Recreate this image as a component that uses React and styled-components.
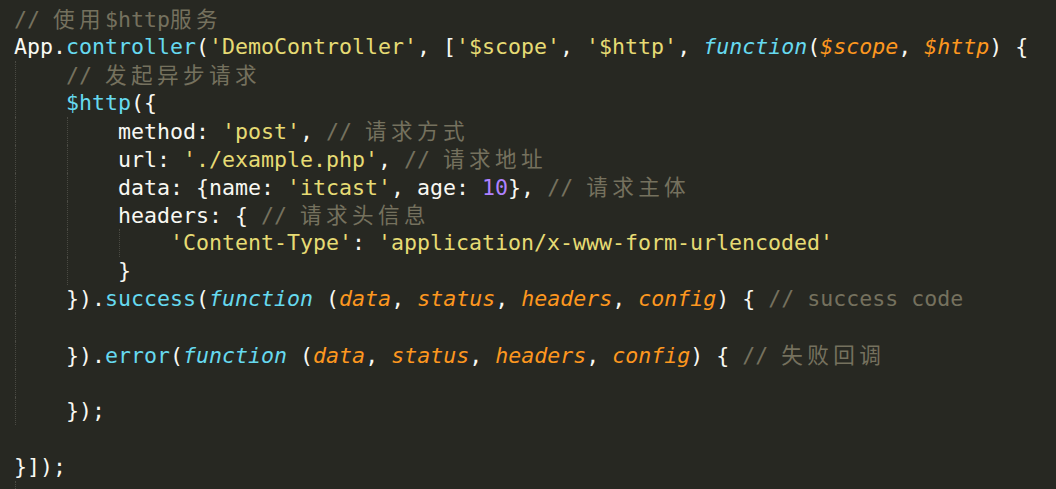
import React from 'react';
import styled, { createGlobalStyle } from 'styled-components';

const GlobalStyle = createGlobalStyle`
    html, body {
        margin: 0;
        padding: 0;
        background: #272822;
    }
`;

const Editor = styled.div`
    box-sizing: border-box;
    min-height: 100vh;
    background: #272822;
    padding: 5px 0 0 14px;
    font-family: "DejaVu Sans Mono", "Noto Sans CJK SC", monospace;
    font-size: 21.6px;
    color: #f8f8f2;
    overflow: hidden;
`;

const Line = styled.div`
    display: flex;
    align-items: center;
    height: 28px;
    line-height: 28px;
`;

const Code = styled.span`
    white-space: pre;
`;

// one indent level = 4 columns, dotted guide when the block goes on
const Indent = styled.span`
    display: inline-block;
    flex: none;
    box-sizing: border-box;
    height: 28px;
    margin-left: ${p => (p.$guide ? '1px' : '0')};
    width: ${p => (p.$guide ? '51px' : '52px')};
    border-left: ${p => (p.$guide ? '1px dotted #4a4a43' : 'none')};
`;

const Fn = styled.span`color: #66d9ef;`;
const Kw = styled.span`color: #66d9ef; font-style: italic;`;
const Str = styled.span`color: #e6db74;`;
const Param = styled.span`color: #fd971f; font-style: italic;`;
const Num = styled.span`color: #ae81ff;`;
const Cm = styled.span`color: #75715e;`;
// CJK glyphs take two columns in the editor grid
const Cjk = styled.span`
    font-family: "Noto Sans CJK SC", sans-serif;
    letter-spacing: 4.4px;
`;

const Row = ({ levels = [], children }) => (
    <Line>
        {levels.map((g, i) => <Indent key={i} $guide={g} />)}
        {children && <Code>{children}</Code>}
    </Line>
);

const Params = () => (
    <>
        (<Param>data</Param>, <Param>status</Param>, <Param>headers</Param>, <Param>config</Param>)
    </>
);

const App = () => {
    return (
        <Editor>
            <GlobalStyle />
            <Row><Cm>// <Cjk>使用</Cjk>$http<Cjk>服务</Cjk></Cm></Row>
            <Row>
                App.<Fn>controller</Fn>(<Str>'DemoController'</Str>, [<Str>'$scope'</Str>, <Str>'$http'</Str>, <Kw>function</Kw>(<Param>$scope</Param>, <Param>$http</Param>) {'{'}
            </Row>
            <Row levels={[true]}><Cm>// <Cjk>发起异步请求</Cjk></Cm></Row>
            <Row levels={[true]}><Fn>$http</Fn>({'{'}</Row>
            <Row levels={[true, true]}>method: <Str>'post'</Str>, <Cm>// <Cjk>请求方式</Cjk></Cm></Row>
            <Row levels={[true, true]}>url: <Str>'./example.php'</Str>, <Cm>// <Cjk>请求地址</Cjk></Cm></Row>
            <Row levels={[true, true]}>data: {'{'}name: <Str>'itcast'</Str>, age: <Num>10</Num>{'}'}, <Cm>// <Cjk>请求主体</Cjk></Cm></Row>
            <Row levels={[true, true]}>headers: {'{'} <Cm>// <Cjk>请求头信息</Cjk></Cm></Row>
            <Row levels={[true, true, true]}><Str>'Content-Type'</Str>: <Str>'application/x-www-form-urlencoded'</Str></Row>
            <Row levels={[true, true]}>{'}'}</Row>
            <Row levels={[true]}>{'}'}).<Fn>success</Fn>(<Kw>function</Kw> <Params /> {'{'} <Cm>// success code</Cm></Row>
            <Row levels={[true]} />
            <Row levels={[true]}>{'}'}).<Fn>error</Fn>(<Kw>function</Kw> <Params /> {'{'} <Cm>// <Cjk>失败回调</Cjk></Cm></Row>
            <Row levels={[true]} />
            <Row levels={[true]}>{'}'});</Row>
            <Row />
            <Row>{'}'}]);</Row>
            <Row levels={[true]} />
        </Editor>
    );
};

export default App;
